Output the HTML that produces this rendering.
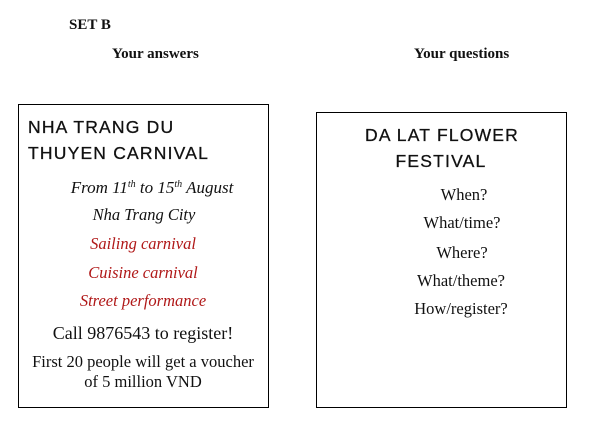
<!DOCTYPE html>
<html><head><style>
body{margin:0;width:596px;height:421px;background:#fff;position:relative;font-family:"Liberation Serif",serif;color:#111;overflow:hidden}
.a{position:absolute;white-space:nowrap;line-height:1}
.c{transform:translateX(-50%)}
.box{position:absolute;border:1px solid #000}
.h{font-family:"Liberation Sans",sans-serif;font-size:17.5px;letter-spacing:1.2px;-webkit-text-stroke:0.3px #111}
.i{font-style:italic;font-size:16.5px}
.r{color:#b01818}
.n{font-size:16.5px}
sup{font-size:10px;vertical-align:6px;line-height:0}
</style></head><body>
<div class="a" style="left:69px;top:18px;font-size:15px;font-weight:bold">SET B</div>
<div class="a" style="left:112px;top:47px;font-size:15px;font-weight:bold">Your answers</div>
<div class="a" style="left:414px;top:47px;font-size:15px;font-weight:bold">Your questions</div>
<div class="box" style="left:18px;top:104px;width:249px;height:302px"></div>
<div class="box" style="left:316px;top:112px;width:249px;height:294px"></div>
<div class="a h" style="left:28px;top:119px">NHA TRANG DU</div>
<div class="a h" style="left:28px;top:145px">THUYEN CARNIVAL</div>
<div class="a i c" style="left:152px;top:179px;font-size:17px">From 11<sup>th</sup> to 15<sup>th</sup> August</div>
<div class="a i c" style="left:144px;top:207px">Nha Trang City</div>
<div class="a i c r" style="left:143px;top:236px">Sailing carnival</div>
<div class="a i c r" style="left:143px;top:265px">Cuisine carnival</div>
<div class="a i c r" style="left:143px;top:293px">Street performance</div>
<div class="a c" style="left:143px;top:324px;font-size:18px">Call 9876543 to register!</div>
<div class="a c n" style="left:143px;top:354px">First 20 people will get a voucher</div>
<div class="a c n" style="left:143px;top:374px">of 5 million VND</div>
<div class="a h c" style="left:442px;top:127px">DA LAT FLOWER</div>
<div class="a h c" style="left:441px;top:153px">FESTIVAL</div>
<div class="a c n" style="left:464px;top:187px">When?</div>
<div class="a c n" style="left:462px;top:215px">What/time?</div>
<div class="a c n" style="left:462px;top:245px">Where?</div>
<div class="a c n" style="left:461px;top:273px">What/theme?</div>
<div class="a c n" style="left:461px;top:301px">How/register?</div>
</body></html>
